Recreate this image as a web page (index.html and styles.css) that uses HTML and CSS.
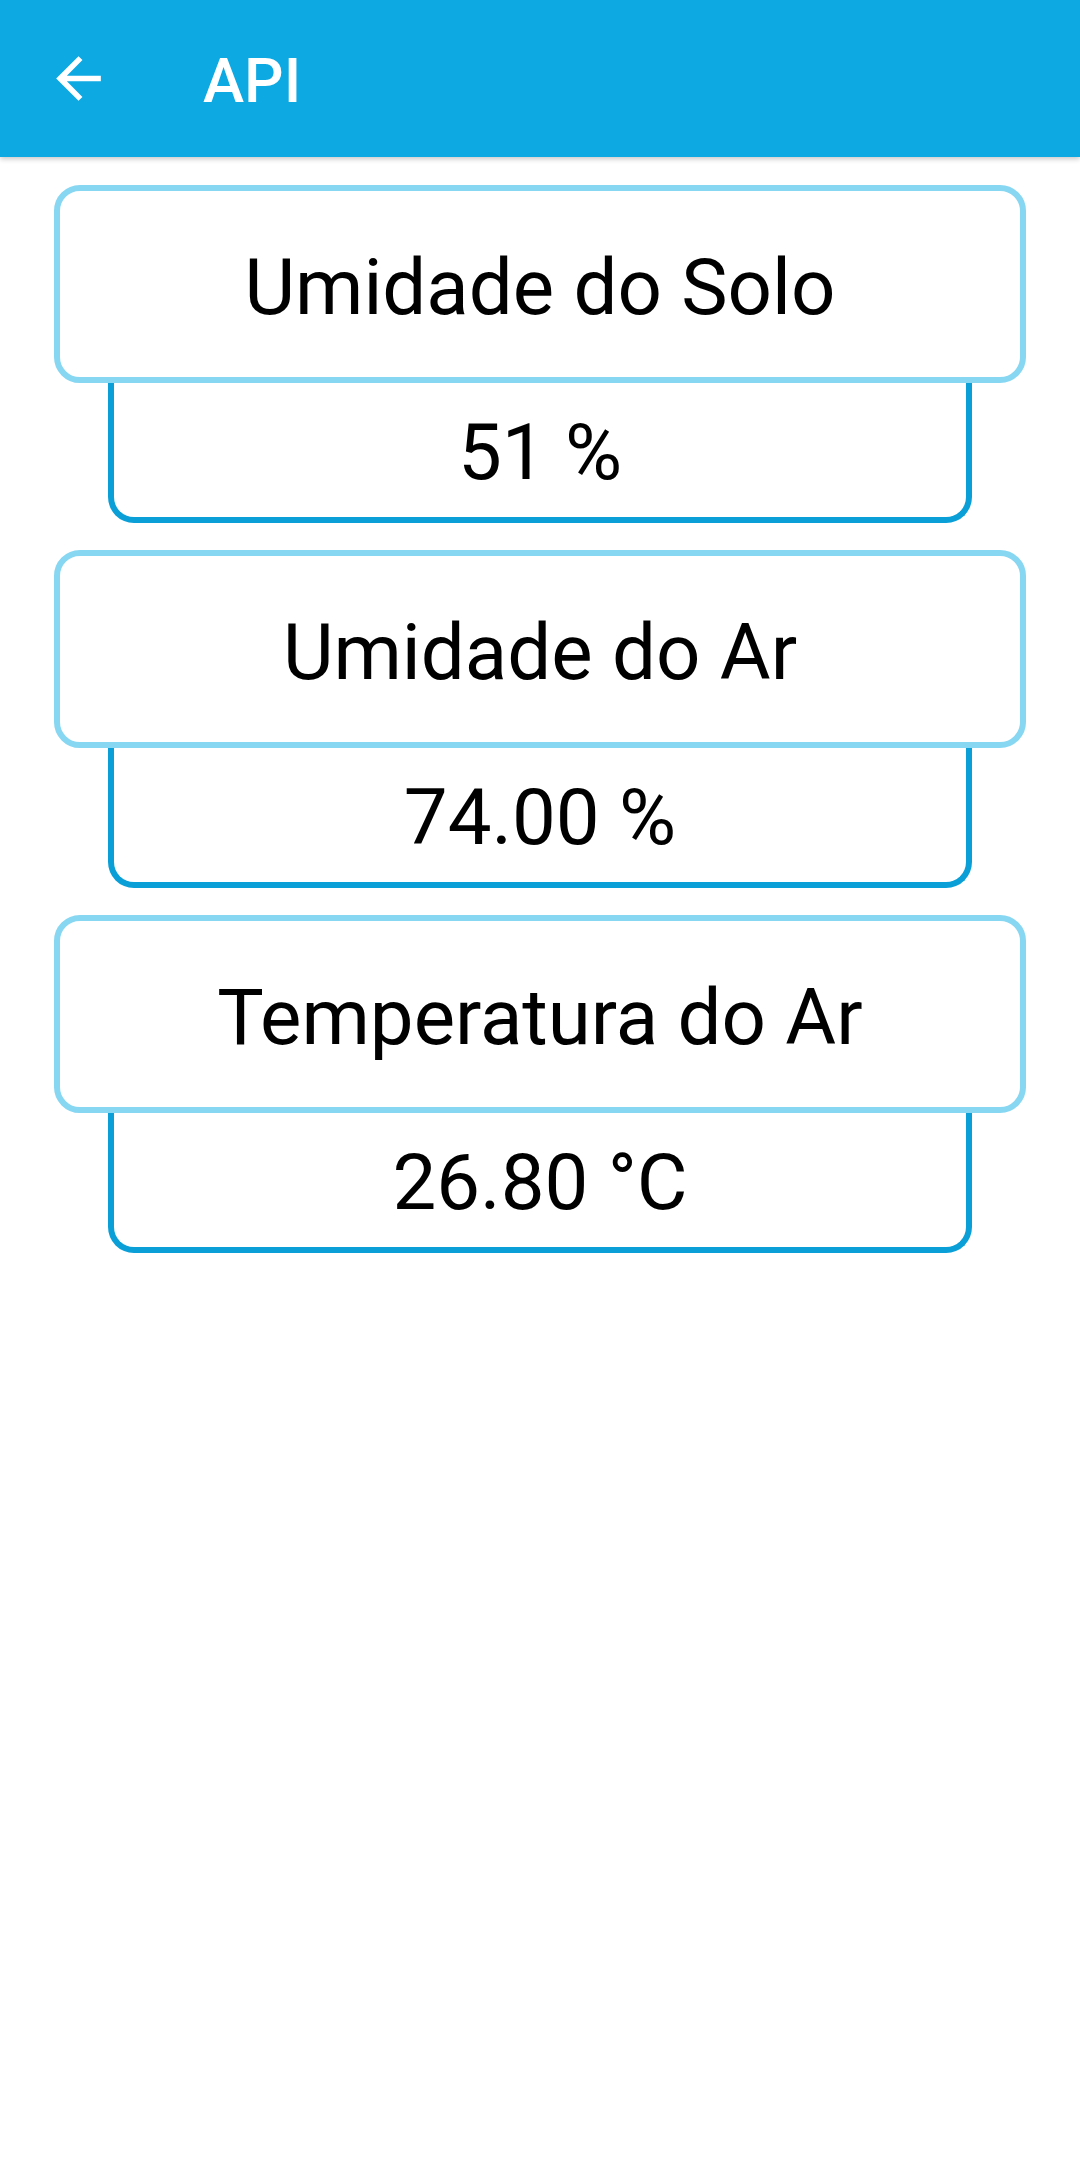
FILE: index.html
```html
<!DOCTYPE html>
<html lang="pt">
<head>
<meta charset="utf-8">
<title>API</title>
<link rel="stylesheet" href="styles.css">
</head>
<body>
<header class="appbar">
  <svg class="back" viewBox="0 0 24 24" width="67" height="67" aria-hidden="true">
    <path d="M20 11H7.83l5.59-5.59L12 4l-8 8 8 8 1.41-1.41L7.83 13H20v-2z" fill="#fff"/>
  </svg>
  <h1 class="title">API</h1>
</header>
<main class="content">
  <section class="card">
    <div class="card-title">Umidade do Solo</div>
    <div class="card-value">51 %</div>
  </section>
  <section class="card">
    <div class="card-title">Umidade do Ar</div>
    <div class="card-value">74.00 %</div>
  </section>
  <section class="card">
    <div class="card-title">Temperatura do Ar</div>
    <div class="card-value">26.80 °C</div>
  </section>
</main>
</body>
</html>
```
FILE: styles.css
```css
html, body {
  margin: 0;
  padding: 0;
  background: #ffffff;
}
body {
  font-family: Roboto, "Noto Sans", "Liberation Sans", sans-serif;
  color: #000;
  width: 1080px;
  min-height: 2173px;
}
.appbar {
  height: 157px;
  background: #0ca9e3;
  display: flex;
  align-items: center;
  box-shadow: 0 2px 5px rgba(0, 0, 0, 0.22);
  position: relative;
  z-index: 2;
}
.back {
  display: block;
  margin-left: 45px;
  flex: none;
}
.title {
  margin: 0 0 0 91px;
  font-size: 62px;
  font-weight: 500;
  color: #fff;
  line-height: 1;
  padding-top: 4px;
}
.content {
  padding-top: 28px;
  display: flex;
  flex-direction: column;
  gap: 27px;
}
.card {
  display: flex;
  flex-direction: column;
}
.card-title {
  margin: 0 54px;
  height: 198px;
  box-sizing: border-box;
  border: 6px solid #87d6f2;
  border-radius: 26px;
  background: #fff;
  display: flex;
  align-items: center;
  justify-content: center;
  font-size: 78px;
  padding-top: 6px;
  position: relative;
  z-index: 1;
}
.card-value {
  margin: 0 108px;
  height: 140px;
  box-sizing: border-box;
  border: 6px solid #0a9fd7;
  border-top: none;
  border-radius: 0 0 26px 26px;
  display: flex;
  align-items: center;
  justify-content: center;
  font-size: 78px;
  padding-top: 4px;
}
```
